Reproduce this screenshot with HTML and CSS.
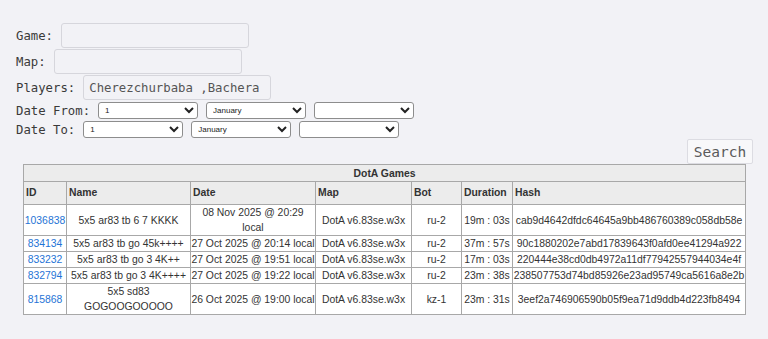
FILE: index.html
```html
<!doctype html>
<html lang="en">
  <head>
    <meta charset="utf-8" />
    <meta name="viewport" content="width=device-width, initial-scale=1" />
    <title>DotA Games</title>
    <link rel="stylesheet" href="styles.css">
  </head>
  <body>
    <form class="search">
      <div class="line">
        <label>Game:</label>
        <input class="field" type="text" />
      </div>
      <div class="line">
        <label>Map:</label>
        <input class="field" type="text" />
      </div>
      <div class="line">
        <label>Players:</label>
        <input class="field" type="text" value="Cherezchurbaba ,Bachera" />
      </div>
      <div class="line dates">
        <label>Date From:</label>
        <select><option>1</option></select>
        <select><option>January</option></select>
        <select><option></option></select>
      </div>
      <div class="line dates">
        <label>Date To:</label>
        <select><option>1</option></select>
        <select><option>January</option></select>
        <select><option></option></select>
      </div>
      <div class="actions">
        <button class="btn" type="button">Search</button>
      </div>
    </form>
    <table class="games">
      <colgroup>
        <col class="c-id">
        <col class="c-name">
        <col class="c-date">
        <col class="c-map">
        <col class="c-bot">
        <col class="c-dur">
        <col class="c-hash">
      </colgroup>
      <tr>
        <th class="caption" colspan="7">DotA Games</th>
      </tr>
      <tr class="head">
        <th>ID</th>
        <th>Name</th>
        <th>Date</th>
        <th>Map</th>
        <th>Bot</th>
        <th>Duration</th>
        <th>Hash</th>
      </tr>
      <tr>
        <td><a href="#">1036838</a></td>
        <td>5x5 ar83 tb 6 7 KKKK</td>
        <td>08 Nov 2025 @ 20:29<br>local</td>
        <td>DotA v6.83se.w3x</td>
        <td>ru-2</td>
        <td>19m : 03s</td>
        <td>cab9d4642dfdc64645a9bb486760389c058db58e</td>
      </tr>
      <tr>
        <td><a href="#">834134</a></td>
        <td>5x5 ar83 tb go 45k++++</td>
        <td>27 Oct 2025 @ 20:14 local</td>
        <td>DotA v6.83se.w3x</td>
        <td>ru-2</td>
        <td>37m : 57s</td>
        <td>90c1880202e7abd17839643f0afd0ee41294a922</td>
      </tr>
      <tr>
        <td><a href="#">833232</a></td>
        <td>5x5 ar83 tb go 3 4K++</td>
        <td>27 Oct 2025 @ 19:51 local</td>
        <td>DotA v6.83se.w3x</td>
        <td>ru-2</td>
        <td>17m : 03s</td>
        <td>220444e38cd0db4972a11df77942557944034e4f</td>
      </tr>
      <tr>
        <td><a href="#">832794</a></td>
        <td>5x5 ar83 tb go 3 4K++++</td>
        <td>27 Oct 2025 @ 19:22 local</td>
        <td>DotA v6.83se.w3x</td>
        <td>ru-2</td>
        <td>23m : 38s</td>
        <td>238507753d74bd85926e23ad95749ca5616a8e2b</td>
      </tr>
      <tr>
        <td><a href="#">815868</a></td>
        <td>5x5 sd83<br>GOGOOGOOOOO</td>
        <td>26 Oct 2025 @ 19:00 local</td>
        <td>DotA v6.83se.w3x</td>
        <td>kz-1</td>
        <td>23m : 31s</td>
        <td>3eef2a746906590b05f9ea71d9ddb4d223fb8494</td>
      </tr>
    </table>
  </body>
</html>
```

FILE: styles.css
```css
body {
  margin: 0;
  padding: 23px 15px 0 16px;
  background: #f2f2f6;
  color: #3a3a3a;
  font-family: "DejaVu Sans Mono", monospace;
  font-size: 12.3px;
}
.search {
  margin: 0;
}
.line {
  display: flex;
  align-items: center;
  gap: 8px;
  margin-bottom: 1px;
}
.line label {
  color: #3a3a3a;
}
.field {
  box-sizing: border-box;
  width: 188px;
  height: 25px;
  padding: 0 5px;
  border: 1px solid #d6d6dc;
  border-radius: 3px;
  background: #f2f2f6;
  color: #555;
  font-family: "DejaVu Sans Mono", monospace;
  font-size: 12.3px;
}
.dates {
  margin-top: 2px;
}
.dates select {
  box-sizing: border-box;
  width: 100px;
  height: 17px;
  padding: 0 2px;
  border: 1px solid #8d8d8d;
  border-radius: 3px;
  background: #fff;
  color: #222;
  font-family: "Liberation Sans", Arial, sans-serif;
  font-size: 8px;
}
.actions {
  display: flex;
  justify-content: flex-end;
  margin-top: 1px;
}
.btn {
  box-sizing: border-box;
  width: 66px;
  height: 25px;
  padding: 0;
  border: 1px solid #dcdce2;
  border-radius: 2px;
  background: #f8f8fa;
  color: #5a5a5a;
  font-family: "DejaVu Sans Mono", monospace;
  font-size: 14.5px;
}
.games {
  margin-left: 7px;
  width: 723px;
  table-layout: fixed;
  border-collapse: collapse;
  border: 1px solid #9a9a9a;
  background: #fff;
  color: #333;
  font-family: "Liberation Sans", Arial, sans-serif;
  font-size: 10.4px;
}
.games th,
.games td {
  border: 1px solid #a8a8a8;
  line-height: 15px;
  padding: 0;
  white-space: nowrap;
}
.games th {
  background: #ececec;
  text-align: left;
  font-weight: bold;
  color: #333;
}
.games .caption {
  text-align: center;
  height: 16px;
}
.games .head th {
  padding: 3px 2px 4px;
}
.games td {
  text-align: center;
}
.games a {
  color: #1f74d6;
  text-decoration: none;
}
.c-id { width: 43px; }
.c-name { width: 124px; }
.c-date { width: 125px; }
.c-map { width: 96px; }
.c-bot { width: 50px; }
.c-dur { width: 51px; }
.c-hash { width: 233px; }
```
